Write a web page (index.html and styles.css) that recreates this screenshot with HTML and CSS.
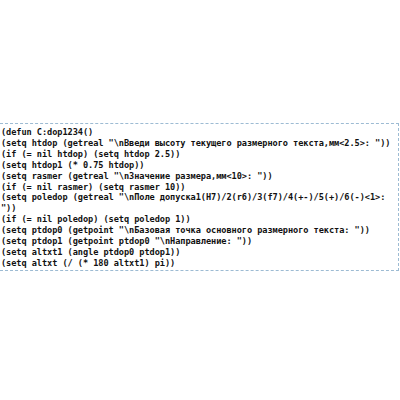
FILE: index.html
```html
<!DOCTYPE html>
<html lang="ru">
<head>
<meta charset="utf-8">
<link rel="stylesheet" href="styles.css">
</head>
<body>
<div class="box">
<pre class="code">(defun C:dop1234()
(setq htdop (getreal "\nВведи высоту текущего размерного текста,мм&lt;2.5&gt;: "))
(if (= nil htdop) (setq htdop 2.5))
(setq htdop1 (* 0.75 htdop))
(setq rasmer (getreal "\nЗначение размера,мм&lt;10&gt;: "))
(if (= nil rasmer) (setq rasmer 10))
(setq poledop (getreal "\nПоле допуска1(H7)/2(r6)/3(f7)/4(+-)/5(+)/6(-)&lt;1&gt;:
"))
(if (= nil poledop) (setq poledop 1))
(setq ptdop0 (getpoint "\nБазовая точка основного размерного текста: "))
(setq ptdop1 (getpoint ptdop0 "\nНаправление: "))
(setq altxt1 (angle ptdop0 ptdop1))
(setq altxt (/ (* 180 altxt1) pi))</pre>
</div>
</body>
</html>
```

FILE: styles.css
```css
html, body {
  margin: 0;
  padding: 0;
  background: #ffffff;
}
.box {
  margin-top: 123px;
  width: 397px;
  border-top: 1px dashed #9dbbd3;
  border-right: 1px dashed #9dbbd3;
  border-bottom: 1px dashed #9dbbd3;
  padding: 3px 0 1px 1px;
  box-sizing: content-box;
}
.code {
  margin: 0;
  font-family: "DejaVu Sans Mono", monospace;
  font-weight: bold;
  font-size: 8.6px;
  line-height: 10.9px;
  letter-spacing: -0.05px;
  color: #111111;
  white-space: pre;
}
```
